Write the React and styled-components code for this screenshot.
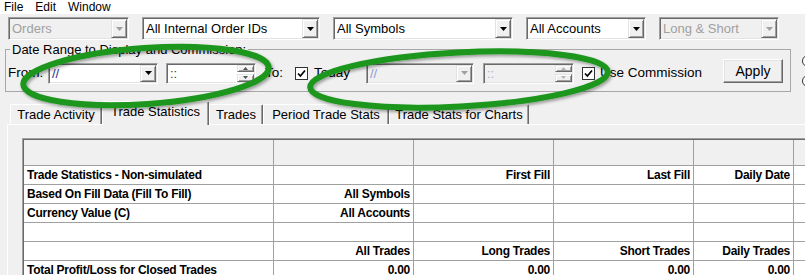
import React from "react";
import styled, { createGlobalStyle } from "styled-components";

const GlobalStyle = createGlobalStyle`
  html, body {
    margin: 0;
    padding: 0;
    background: #f0f0f0;
  }
`;

const Window = styled.div`
  position: relative;
  width: 805px;
  height: 275px;
  overflow: hidden;
  background: #f0f0f0;
  font-family: "Liberation Sans", Arial, sans-serif;
  font-size: 13px;
  color: #000;
`;

const MenuBar = styled.div`
  display: flex;
  gap: 12px;
  height: 14px;
  padding-left: 4px;
  background: #fff;
  font-size: 12px;
  line-height: 14px;
`;

const FilterRow = styled.div`
  display: flex;
  gap: 13px;
  margin: 3px 0 0 8px;
`;

// sunken 3D frame shared by combos and spin boxes
const Field = styled.div`
  box-sizing: border-box;
  flex: none;
  display: flex;
  align-items: stretch;
  width: ${(p) => p.$w}px;
  height: ${(p) => p.$h || 23}px;
  margin-left: ${(p) => p.$ml || 0}px;
  padding: 1px;
  background: ${(p) => (p.$disabled ? "#f0f0f0" : "#fff")};
  border: 1px solid;
  border-color: #a0a0a0 #fff #fff #a0a0a0;
  box-shadow: inset 1px 1px #696969, inset -1px -1px #e3e3e3;
`;

const FieldText = styled.span`
  flex: 1;
  min-width: 0;
  padding-left: 2px;
  overflow: hidden;
  white-space: nowrap;
  font-size: 13px;
  line-height: ${(p) => p.$lh || 19}px;
  color: ${(p) => p.$color || "#000"};
`;

const DropButton = styled.div`
  box-sizing: border-box;
  width: 16px;
  display: flex;
  align-items: center;
  justify-content: center;
  background: #f0f0f0;
  border: 1px solid;
  border-color: #e3e3e3 #696969 #696969 #e3e3e3;
  box-shadow: inset 1px 1px #fff, inset -1px -1px #a0a0a0;
`;

const SpinColumn = styled.div`
  display: flex;
  flex-direction: column;
  gap: 2px;
  width: 17px;
`;

const SpinButton = styled(DropButton)`
  width: 17px;
  flex: 1;
`;

const Arrow = ({ color = "#000", w = 7, h = 4, up = false }) => (
  <svg width={w} height={h} viewBox={`0 0 ${w} ${h}`}>
    <polygon
      points={up ? `0,${h} ${w},${h} ${w / 2},0` : `0,0 ${w},0 ${w / 2},${h}`}
      fill={color}
    />
  </svg>
);

const GroupRow = styled.div`
  display: flex;
  margin-top: 2px;
`;

const Group = styled.fieldset`
  box-sizing: border-box;
  flex: none;
  width: 786px;
  min-width: 0;
  margin: 0 0 0 5px;
  padding: 3px 6px 5px 2px;
  border: 1px solid #a8a8a8;
`;

const Legend = styled.legend`
  margin-left: 2px;
  padding: 0 2px;
  font-size: 13px;
  line-height: 15px;
`;

const ControlRow = styled.div`
  display: flex;
  align-items: center;
  height: 26px;
`;

const Label = styled.span`
  flex: none;
  width: ${(p) => p.$w}px;
  margin-left: ${(p) => p.$ml || 0}px;
  font-size: 13.5px;
  line-height: 26px;
  white-space: nowrap;
`;

const CheckBox = styled.div`
  box-sizing: border-box;
  flex: none;
  width: 13px;
  height: 13px;
  margin-left: ${(p) => p.$ml || 0}px;
  display: flex;
  align-items: center;
  justify-content: center;
  background: #fff;
  border: 1px solid #333;
`;

const Button = styled.button`
  box-sizing: border-box;
  flex: none;
  align-self: flex-start;
  width: 60px;
  height: 24px;
  margin-top: -1px;
  padding: 0;
  font-family: "Liberation Sans", Arial, sans-serif;
  font-size: 14px;
  color: #000;
  background: #f0f0f0;
  border: 1px solid;
  border-color: #fff #696969 #696969 #fff;
  box-shadow: inset -1px -1px #a0a0a0, inset 1px 1px #e3e3e3;
`;

const SideOptions = styled.div`
  flex: none;
  display: flex;
  flex-direction: column;
  gap: 8px;
  margin: 13px 0 0 11px;
`;

const Radio = styled.div`
  box-sizing: border-box;
  width: 12px;
  height: 12px;
  border-radius: 50%;
  border: 1px solid #333;
  background: #fff;
`;

const TabStrip = styled.div`
  display: flex;
  align-items: flex-end;
  height: 23px;
  margin: 9px 0 0 10px;
`;

const Tab = styled.div`
  box-sizing: border-box;
  flex: none;
  position: relative;
  z-index: ${(p) => (p.$active ? 1 : 0)};
  width: ${(p) => p.$w}px;
  height: ${(p) => (p.$active ? 24 : 20)}px;
  margin-bottom: ${(p) => (p.$active ? -1 : 0)}px;
  padding-top: 1px;
  background: #f0f0f0;
  border-top: 1px solid #fff;
  border-left: 1px solid #fff;
  border-right: 1px solid #696969;
  border-radius: 2px 2px 0 0;
  box-shadow: inset -1px 0 #a0a0a0;
  text-align: center;
  font-size: 13px;
  line-height: 17px;
  white-space: nowrap;
`;

const TabPanel = styled.div`
  margin-left: 7px;
  padding: 13px 0 0 14px;
  border-top: 1px solid #fff;
  border-left: 1px solid #fff;
`;

const GridFrame = styled.div`
  border-top: 1px solid #a0a0a0;
  border-left: 1px solid #a0a0a0;
`;

const Grid = styled.div`
  display: grid;
  grid-template-columns: 250px 140px 140px 140px 100px 80px;
  width: max-content;
  border-top: 1px solid #696969;
  border-left: 1px solid #696969;
`;

const Cell = styled.div`
  box-sizing: border-box;
  height: ${(p) => (p.$head ? 26 : 19)}px;
  padding: 0 3px;
  background: ${(p) => (p.$head ? "#f0f0f0" : "#fff")};
  border-right: 1px solid #a0a0a0;
  border-bottom: 1px solid #a0a0a0;
  text-align: ${(p) => (p.$left ? "left" : "right")};
  font-size: 12px;
  font-weight: bold;
  letter-spacing: -0.25px;
  line-height: 18px;
  white-space: nowrap;
  overflow: hidden;
`;

const Annotation = styled.svg`
  position: absolute;
  left: 0;
  top: 0;
  z-index: 5;
  pointer-events: none;
`;

const tabs = [
  { label: "Trade Activity", w: 92 },
  { label: "Trade Statistics", w: 107, active: true },
  { label: "Trades", w: 54 },
  { label: "Period Trade Stats", w: 126 },
  { label: "Trade Stats for Charts", w: 140 },
];

const rows = [
  ["", "", "", "", "", ""],
  ["Trade Statistics - Non-simulated", "", "First Fill", "Last Fill", "Daily Date", ""],
  ["Based On Fill Data (Fill To Fill)", "All Symbols", "", "", "", ""],
  ["Currency Value (C)", "All Accounts", "", "", "", ""],
  ["", "", "", "", "", ""],
  ["", "All Trades", "Long Trades", "Short Trades", "Daily Trades", ""],
  ["Total Profit/Loss for Closed Trades", "0.00", "0.00", "0.00", "0.00", ""],
];

function Combo({ w, text, disabled }) {
  return (
    <Field $w={w} $disabled={disabled}>
      <FieldText $color={disabled ? "#a0a0a0" : "#000"}>{text}</FieldText>
      <DropButton>
        <Arrow color={disabled ? "#a0a0a0" : "#000"} />
      </DropButton>
    </Field>
  );
}

function DateCombo({ w, ml, disabled }) {
  return (
    <Field $w={w} $h={21} $ml={ml} $disabled={disabled}>
      <FieldText $lh={17} $color={disabled ? "#8c9fd0" : "#1e2e8c"}>//</FieldText>
      <DropButton>
        <Arrow color={disabled ? "#a0a0a0" : "#000"} />
      </DropButton>
    </Field>
  );
}

function TimeSpin({ w, ml, disabled }) {
  const c = disabled ? "#b4b4b4" : "#505050";
  return (
    <Field $w={w} $h={21} $ml={ml} $disabled={disabled}>
      <FieldText $lh={17} $color={disabled ? "#b8a8cc" : "#404040"}>::</FieldText>
      <SpinColumn>
        <SpinButton>
          <Arrow up w={5} h={3} color={c} />
        </SpinButton>
        <SpinButton>
          <Arrow w={5} h={3} color={c} />
        </SpinButton>
      </SpinColumn>
    </Field>
  );
}

function Check({ ml }) {
  return (
    <CheckBox $ml={ml}>
      <svg width="9" height="9" viewBox="0 0 9 9">
        <path d="M1 4.5 L3.4 7 L8 1.5" fill="none" stroke="#000" strokeWidth="1.7" />
      </svg>
    </CheckBox>
  );
}

export default function App() {
  return (
    <Window>
      <GlobalStyle />
      <MenuBar>
        <span>File</span>
        <span>Edit</span>
        <span>Window</span>
      </MenuBar>

      <FilterRow>
        <Combo w={121} text="Orders" disabled />
        <Combo w={178} text="All Internal Order IDs" />
        <Combo w={180} text="All Symbols" />
        <Combo w={120} text="All Accounts" />
        <Combo w={120} text="Long & Short" disabled />
      </FilterRow>

      <GroupRow>
        <Group>
          <Legend>Date Range to Display and Commission:</Legend>
          <ControlRow>
            <Label $w={40}>From:</Label>
            <DateCombo w={110} />
            <TimeSpin w={90} ml={8} />
            <Label $w={30} $ml={9}>To:</Label>
            <Check />
            <Label $w={52} $ml={6}>Today</Label>
            <DateCombo w={108} disabled />
            <TimeSpin w={91} ml={9} disabled />
            <Check ml={8} />
            <Label $w={123} $ml={5}>Use Commission</Label>
            <Button>Apply</Button>
          </ControlRow>
        </Group>
        <SideOptions>
          <Radio />
          <Radio />
        </SideOptions>
      </GroupRow>

      <TabStrip>
        {tabs.map((t) => (
          <Tab key={t.label} $w={t.w} $active={t.active}>
            {t.label}
          </Tab>
        ))}
      </TabStrip>

      <TabPanel>
        <GridFrame>
          <Grid>
            {rows.map((row, r) =>
              row.map((val, c) => (
                <Cell key={`${r}-${c}`} $head={r === 0} $left={c === 0}>
                  {val}
                </Cell>
              ))
            )}
          </Grid>
        </GridFrame>
      </TabPanel>

      <Annotation width="805" height="275" viewBox="0 0 805 275">
        <defs>
          <filter id="shade" x="-10%" y="-40%" width="120%" height="180%">
            <feDropShadow dx="1.5" dy="2" stdDeviation="1.5" floodColor="#000" floodOpacity="0.35" />
          </filter>
        </defs>
        <g fill="none" stroke="#1c961c" strokeWidth="6" filter="url(#shade)">
          <ellipse cx="146" cy="76" rx="123" ry="28" transform="rotate(-4 146 76)" />
          <ellipse cx="459" cy="79.5" rx="149" ry="27" transform="rotate(-3 459 79.5)" />
        </g>
      </Annotation>
    </Window>
  );
}
